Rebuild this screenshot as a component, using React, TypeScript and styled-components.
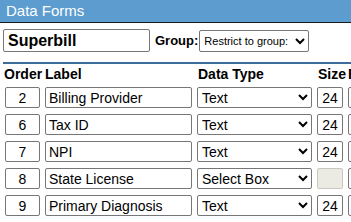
import React from "react";
import styled, { createGlobalStyle } from "styled-components";

const Global = createGlobalStyle`
  html, body { margin: 0; padding: 0; background: #fff; }
  body { font-family: "Liberation Sans", Arial, sans-serif; overflow: hidden; }
`;

const Page = styled.div`
  width: 351px;
  height: 222px;
  overflow: hidden;
  background: #fff;
`;

const TitleBar = styled.div`
  height: 22px;
  background: #5d9ccf;
  border-bottom: 1px solid #1b1b1b;
  color: #fff;
  font-size: 15px;
  line-height: 22px;
  padding-left: 6px;
`;

const Toolbar = styled.div`
  display: flex;
  align-items: center;
  padding: 6px 0 0 3px;
  gap: 5px;
`;

const NameInput = styled.input`
  box-sizing: border-box;
  width: 147px;
  height: 23px;
  border: 1px solid #767676;
  border-radius: 2px;
  padding: 0 4px;
  font-family: "Liberation Sans", Arial, sans-serif;
  font-weight: bold;
  font-size: 16px;
  color: #000;
`;

const FieldLabel = styled.span`
  font-weight: bold;
  font-size: 13px;
  color: #000;
`;

const SmallSelect = styled.select`
  box-sizing: border-box;
  width: 110px;
  height: 22px;
  margin-left: -4px;
  border: 1px solid #767676;
  border-radius: 2px;
  font-family: "Liberation Sans", Arial, sans-serif;
  font-size: 11px;
  color: #000;
  background: #fff;
`;

const Divider = styled.div`
  height: 2px;
  background: #3d6b9b;
  margin: 10px 0 0 3px;
`;

const Grid = styled.div`
  display: grid;
  grid-template-columns: 35px 147px 115px 26px 30px;
  column-gap: 5px;
  row-gap: 6px;
  padding: 2px 0 0 5px;
  width: 400px;
  align-items: center;
`;

const HeadCell = styled.div<{ $shift?: number }>`
  font-weight: bold;
  font-size: 14px;
  color: #000;
  height: 15px;
  line-height: 16px;
  white-space: nowrap;
  margin-left: ${(p) => p.$shift ?? 0}px;
`;

const TextBox = styled.input<{ $center?: boolean }>`
  box-sizing: border-box;
  width: 100%;
  height: 21px;
  border: 1px solid #767676;
  border-radius: 2px;
  padding: 0 3px;
  font-family: "Liberation Sans", Arial, sans-serif;
  font-size: 14px;
  color: #000;
  text-align: ${(p) => (p.$center ? "center" : "left")};
  background: ${(p) => (p.disabled ? "#ebebe4" : "#fff")};
  border-color: ${(p) => (p.disabled ? "#c8c8c0" : "#767676")};
`;

const TypeSelect = styled.select`
  box-sizing: border-box;
  width: 100%;
  height: 21px;
  border: 1px solid #767676;
  border-radius: 2px;
  font-family: "Liberation Sans", Arial, sans-serif;
  font-size: 14px;
  color: #000;
  background: #fff;
`;

const rows = [
  { order: "2", label: "Billing Provider", type: "Text", size: "24" },
  { order: "6", label: "Tax ID", type: "Text", size: "24" },
  { order: "7", label: "NPI", type: "Text", size: "24" },
  { order: "8", label: "State License", type: "Select Box", size: "" },
  { order: "9", label: "Primary Diagnosis", type: "Text", size: "24" },
];

export default function App() {
  return (
    <Page>
      <Global />
      <TitleBar>Data Forms</TitleBar>
      <Toolbar>
        <NameInput defaultValue="Superbill" />
        <FieldLabel>Group:</FieldLabel>
        <SmallSelect defaultValue="r">
          <option value="r">Restrict to group:</option>
        </SmallSelect>
      </Toolbar>
      <Divider />
      <Grid>
        <HeadCell $shift={-1}>Order</HeadCell>
        <HeadCell>Label</HeadCell>
        <HeadCell $shift={1}>Data Type</HeadCell>
        <HeadCell $shift={1}>Size</HeadCell>
        <HeadCell>Required</HeadCell>
        {rows.map((r) => (
          <React.Fragment key={r.order}>
            <TextBox $center defaultValue={r.order} />
            <TextBox defaultValue={r.label} />
            <TypeSelect defaultValue={r.type}>
              <option>Text</option>
              <option>Select Box</option>
            </TypeSelect>
            <TextBox $center defaultValue={r.size} disabled={r.size === ""} />
            <TextBox />
          </React.Fragment>
        ))}
      </Grid>
    </Page>
  );
}
